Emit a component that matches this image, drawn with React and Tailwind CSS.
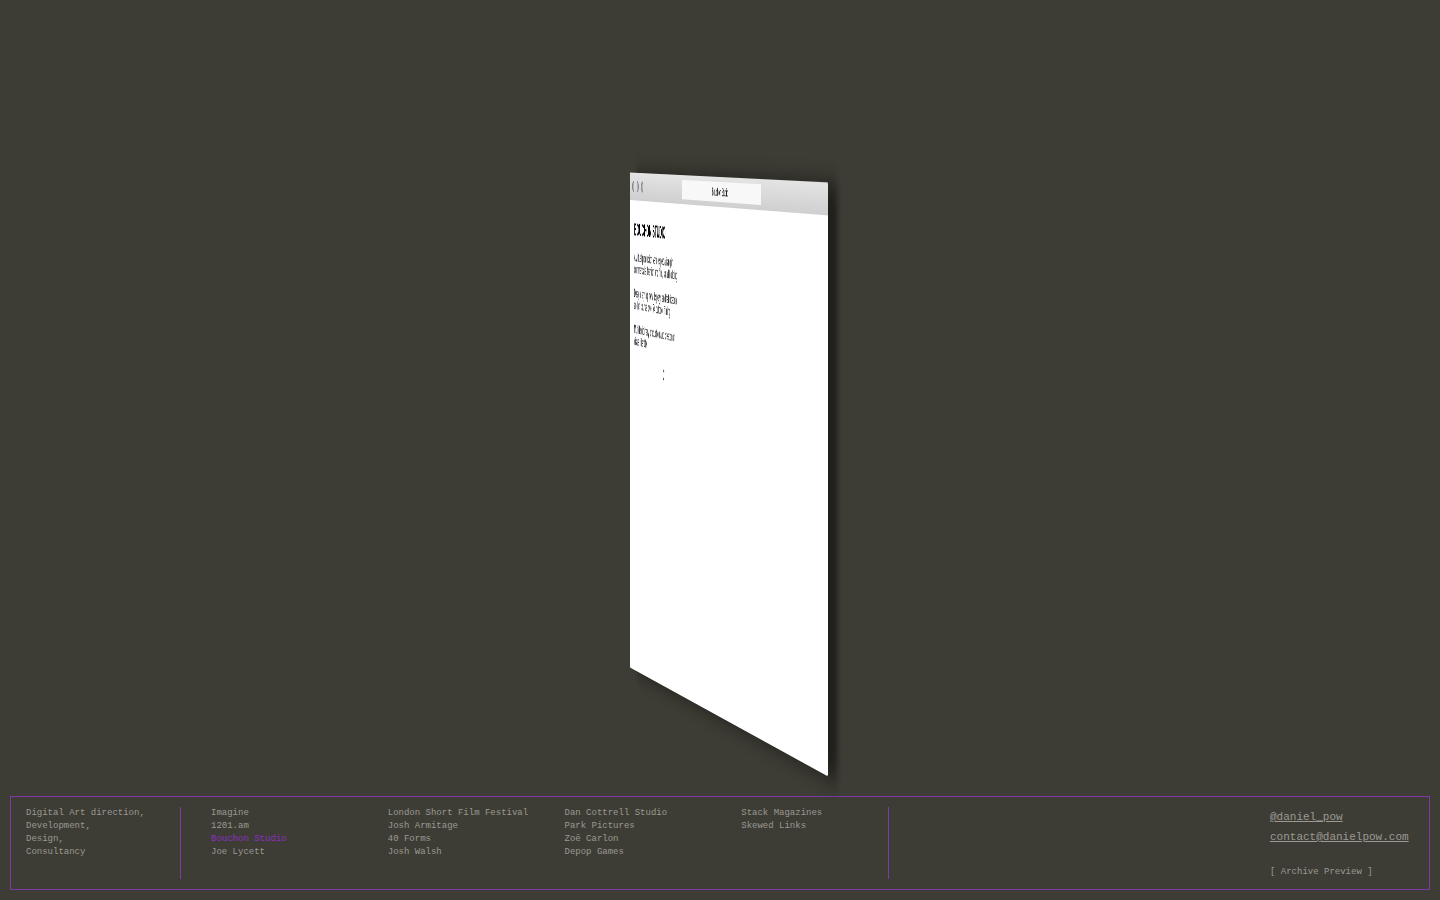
import React from 'react';

const services = ['Digital Art direction,', 'Development,', 'Design,', 'Consultancy'];

const projects = [
  ['Imagine', '1201.am', 'Bouchon Studio', 'Joe Lycett'],
  ['London Short Film Festival', 'Josh Armitage', '40 Forms', 'Josh Walsh'],
  ['Dan Cottrell Studio', 'Park Pictures', 'Zoë Carlon', 'Depop Games'],
  ['Stack Magazines', 'Skewed Links'],
];

const active = 'Bouchon Studio';

const Dots = () => (
  <svg width="72" height="14" viewBox="0 0 72 14" fill="#b4b4b4" stroke="#858585" strokeWidth="2" aria-hidden="true">
    <circle cx="9" cy="7" r="5" />
    <circle cx="34" cy="7" r="5" />
    <circle cx="60" cy="7" r="5" />
  </svg>
);

const Spinner = () => (
  <svg width="12" height="12" viewBox="0 0 12 12" fill="none" stroke="#444" strokeWidth="2" aria-hidden="true">
    <path d="M9 2.5A4.5 4.5 0 1 0 8 10" />
    <path d="M8 7v5" />
  </svg>
);

const Preview = () => (
  <article className="w-2/3 aspect-video rounded-sm overflow-hidden bg-white text-black font-['Liberation_Sans',sans-serif] shadow-[38px_0px_24px_rgba(0,0,0,0.5)] [transform:rotateY(-78.2deg)]">
    <header className="grid grid-cols-[3fr_4fr_3fr] items-center h-[30px] bg-gradient-to-b from-[#e4e4e4] to-[#cfcfcf]">
      <div className="pl-2.5"><Dots /></div>
      <div className="h-5 bg-[#f8f8f8] text-center text-[11px] leading-5">Bouchon Studio</div>
    </header>
    <div className="px-6 pt-5">
      <h1 className="text-[19px] leading-6 font-bold">BOUCHON STUDIO</h1>
      <div className="mt-3 w-[250px] space-y-[13px] text-[12px] leading-[13px] text-[#222]">
        <p>A virtual production venue specialising in commercials, fashion and film, small building</p>
        <p>Design, styling, new displays and fabrication and of course, over 74 outdoor filming</p>
        <p>Multidisciplinary production and creation of visual identity</p>
      </div>
      <div className="mt-4 pl-40"><Spinner /></div>
    </div>
  </article>
);

export default function App() {
  return (
    <div className="min-h-screen flex flex-col bg-[#3e3d35] text-[#9a9993] text-[9px] leading-[13px] font-['Liberation_Mono',monospace] overflow-hidden">
      <main className="flex-1 flex justify-center items-start pt-[177px] [perspective:5168px] [perspective-origin:50%_123px]">
        <Preview />
      </main>

      <footer className="m-2.5 p-2.5 flex border border-[#7d3aa8]">
        <ul className="w-40 pl-[5px] border-r border-[#7d3aa8]">
          {services.map((s) => <li key={s}>{s}</li>)}
        </ul>
        <nav className="flex-1 max-w-[708px] h-[72px] grid grid-cols-4 border-r border-[#7d3aa8]">
          {projects.map((col) => (
            <ul key={col[0]} className="pl-[30px] whitespace-nowrap">
              {col.map((name) => (
                <li key={name}>
                  <a href="#" className={name === active ? 'text-[#8a2fc4]' : ''}>{name}</a>
                </li>
              ))}
            </ul>
          ))}
        </nav>
        <div className="ml-auto w-[149px] flex flex-col items-start">
          <a href="#" className="text-[11px] leading-5 underline">@daniel_pow</a>
          <a href="mailto:contact@danielpow.com" className="text-[11px] leading-5 underline">contact@danielpow.com</a>
          <button type="button" className="mt-auto">[ Archive Preview ]</button>
        </div>
      </footer>
    </div>
  );
}
